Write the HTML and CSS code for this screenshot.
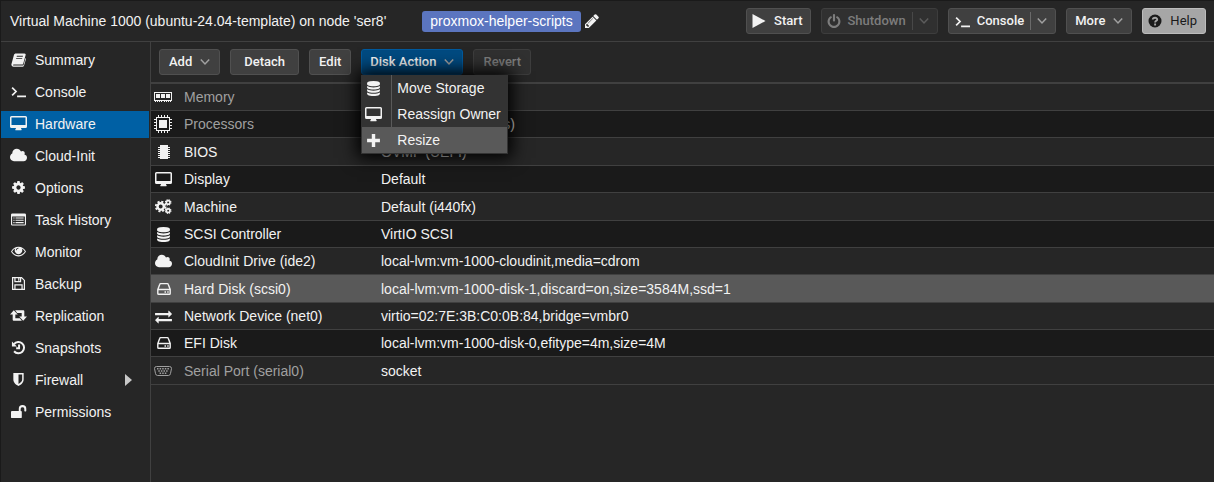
FILE: index.html
```
<!DOCTYPE html>
<html lang="en">
<head>
<meta charset="utf-8">
<title>Virtual Machine 1000</title>
<link rel="stylesheet" href="styles.css">
</head>
<body>
<svg class="sprite" aria-hidden="true">
  <symbol id="book" viewBox="0 0 16 16"><path fill-rule="evenodd" d="M5.200 1.500h9.200c1 0 1.500.8 1.200 1.700l-2.600 9.200c-.2.700-.8 1-1.500 1H3.300c-.9 0-1.300.6-.9 1.100h9.900c.6 0 1-.3 1.200-.9l2-7.200c.5.3.6.8.4 1.400l-2 6.500c-.3.900-1 1.400-1.900 1.400H2.700c-1.500 0-2.700-1.300-2.200-2.800L3.200 3c.3-.9 1-1.500 2-1.500zM6.300 4l-.3 1h6.500l.3-1zm-.7 2.300-.3 1h6.500l.3-1z"/></symbol>
  <symbol id="terminal" viewBox="0 0 16 16"><path fill="none" stroke="currentColor" stroke-width="1.800" d="m1.200 3.800 4.200 4.200-4.200 4.200M6.500 13.200H16"/></symbol>
  <symbol id="desktop" viewBox="0 0 17 15"><path fill-rule="evenodd" d="M1.500 0h14A1.500 1.500 0 0 1 17 1.500v9a1.500 1.500 0 0 1-1.500 1.500H11c0 .8.700 1.100.7 1.700 0 .3-.2.500-.5.500H5.800a.5.5 0 0 1-.5-.5c0-.6.7-.9.7-1.700H1.500A1.500 1.500 0 0 1 0 10.500v-9A1.500 1.500 0 0 1 1.500 0zm0 1.500V9h14V1.500z"/></symbol>
  <symbol id="cloud" viewBox="64 200 1920 1400"><path d="M1984 1152q0 159-112.500 271.500t-271.500 112.500h-1088q-185 0-316.500-131.500t-131.500-316.500q0-132 71-241.500t187-163.500q-2-28-2-43 0-212 150-362t362-150q158 0 286.500 88t187.500 230q70-62 166-62 106 0 181 75t75 181q0 75-41 138 129 30 213 134.500t84 239.500z"/></symbol>
  <symbol id="cog" viewBox="0 0 1792 1792"><path d="M1152 896q0-106-75-181t-181-75-181 75-75 181 75 181 181 75 181-75 75-181zm512-109v222q0 12-8 23t-20 13l-185 28q-19 54-39 91 35 50 107 138 10 12 10 25t-9 23q-27 37-99 108t-94 71q-12 0-26-9l-138-108q-44 23-91 38-16 136-29 186-7 28-36 28h-222q-14 0-24.500-8.500t-11.500-21.500l-28-184q-49-16-90-37l-141 107q-10 9-25 9-14 0-25-11-126-114-165-168-7-10-7-23 0-12 8-23 15-21 51-66.500t54-70.500q-27-50-41-99l-183-27q-13-2-21-12.500t-8-23.500v-222q0-12 8-23t19-13l186-28q14-46 39-92-40-57-107-138-10-12-10-24 0-10 9-23 26-36 98.500-107.500t94.500-71.500q13 0 26 10l138 107q44-23 91-38 16-136 29-186 7-28 36-28h222q14 0 24.500 8.500t11.500 21.500l28 184q49 16 90 37l142-107q9-9 24-9 13 0 25 10 129 119 165 170 7 8 7 22 0 12-8 23-15 21-51 66.500t-54 70.500q26 50 41 98l183 28q13 2 21 12.500t8 23.500z"/></symbol>
  <symbol id="list" viewBox="0 0 16 16"><path fill-rule="evenodd" d="M1.500 1.500h13A1.500 1.500 0 0 1 16 3v10a1.500 1.500 0 0 1-1.500 1.500h-13A1.500 1.500 0 0 1 0 13V3a1.500 1.500 0 0 1 1.500-1.500zM1.200 4.700v8.500h13.600V4.700z"/><path d="M2.500 5.800h1.300V7H2.500zm2.300 0h8.700V7H4.800zM2.500 8.200h1.300v1.200H2.500zm2.300 0h8.700v1.200H4.800zM2.500 10.700h1.300v1.200H2.500zm2.300 0h8.700v1.200H4.800z"/></symbol>
  <symbol id="eye" viewBox="0 0 16 16"><path fill-rule="evenodd" d="M8 2.800c3.400 0 6.300 2 8 5.200-1.700 3.200-4.600 5.200-8 5.200S1.700 11.200 0 8c1.700-3.200 4.600-5.200 8-5.200zM4.500 4.900C3.100 5.600 2 6.700 1.200 8c1.500 2.500 4 4 6.800 4s5.300-1.500 6.800-4c-.8-1.300-1.900-2.400-3.300-3.100A4 4 0 1 1 4.500 4.900zM8 3.900c-1.500 0-2.800 1.200-2.800 2.800h.9c0-1 .9-1.900 1.900-1.900z"/></symbol>
  <symbol id="save" viewBox="0 0 16 16"><path fill="none" stroke="currentColor" stroke-width="1.300" d="M1.700 1.700h9.600l3 3v9.600H1.700zM4.200 14V9.500h7.600V14M4.200 2v4h6V2M8.300 2.500V5"/></symbol>
  <symbol id="retweet" viewBox="0 0 18 16"><path d="M4 2.300 8.200 7H5.600v3.800h4.800l2.200 2.700H3.800c-.6 0-1-.4-1-1V7H-.2zM14 13.700 9.800 9h2.600V5.200H7.600L5.400 2.500h8.800c.6 0 1 .4 1 1V9h3z"/></symbol>
  <symbol id="history" viewBox="0 0 16 16"><path d="M1 1.500v5.300h5.300z"/><path fill="none" stroke="currentColor" stroke-width="2.100" d="M3.200 4.500A6 6 0 1 1 3.300 12M8.600 4.800v3.900H5.500"/></symbol>
  <symbol id="shield" viewBox="0 0 16 16"><path fill-rule="evenodd" d="M2.500 1h11v7c0 3.600-3.300 5.800-5.500 7-2.200-1.200-5.500-3.400-5.500-7zM8 2.600v10.200c2-1.200 3.900-2.700 3.900-4.800V2.600z"/></symbol>
  <symbol id="unlock" viewBox="0 0 16 16"><path fill-rule="evenodd" d="M1 7.500h7.300V5a4 4 0 0 1 8 0v2.300c0 .4-.3.700-.7.700h-.7a.7.7 0 0 1-.7-.7V5a2 2 0 0 0-3.900 0v2.500h.2c.6 0 1 .5 1 1v5.500c0 .6-.4 1-1 1H1a1 1 0 0 1-1-1V8.500a1 1 0 0 1 1-1z"/></symbol>
  <symbol id="play" viewBox="0 0 14 14"><path d="M.5 0 13.500 7 .5 14z"/></symbol>
  <symbol id="power" viewBox="128 0 1536 1664"><path d="M1664 896q0 156-61 298t-164 245-245 164-298 61-298-61-245-164-164-245-61-298q0-182 80.500-343t226.500-270q43-32 95.500-25t83.500 50q32 42 24.500 94.500t-49.500 84.500q-98 74-151.500 181t-53.500 228q0 104 40.500 198.500t109.500 163.500 163.500 109.500 198.500 40.500 198.500-40.500 163.500-109.500 109.500-163.500 40.500-198.500q0-121-53.500-228t-151.500-181q-42-32-49.500-84.500t24.500-94.500q31-43 84-50t95 25q146 109 226.500 270t80.500 343zm-640-768v640q0 52-38 90t-90 38-90-38-38-90v-640q0-52 38-90t90-38 90 38 38 90z"/></symbol>
  <symbol id="question" viewBox="0 0 14 14"><circle cx="7" cy="7" r="6.500"/><path fill="none" stroke="#a6a6a6" stroke-width="1.900" d="M4.700 5.500C5 3.200 9.300 3.200 9.200 5.400 9.200 6.900 7.100 6.800 7.100 8.600M7.100 9.600v1.900"/></symbol>
  <symbol id="pencil" viewBox="128 128 1536 1536"><path d="M491 1536l91-91-235-235-91 91v107h128v128h107zm523-928q0-22-22-22-10 0-17 7l-542 542q-7 7-7 17 0 22 22 22 10 0 17-7l542-542q7-7 7-17zm-54-192l416 416-832 832h-416v-416zm683 96q0 53-37 90l-166 166-416-416 166-165q36-38 90-38 53 0 91 38l235 234q37 39 37 91z"/></symbol>
  <symbol id="chevron" viewBox="0 0 10 10"><path fill="none" stroke="currentColor" stroke-width="1.500" d="m.8 2.500 4.200 4.500 4.200-4.500"/></symbol>
  <symbol id="database" viewBox="128 0 1536 1792"><path d="M896 768q237 0 443-43t325-127v170q0 69-103 128t-280 93.500-385 34.500-385-34.500-280-93.500-103-128v-170q119 84 325 127t443 43zm0 768q237 0 443-43t325-127v170q0 69-103 128t-280 93.500-385 34.500-385-34.500-280-93.500-103-128v-170q119 84 325 127t443 43zm0-384q237 0 443-43t325-127v170q0 69-103 128t-280 93.500-385 34.500-385-34.500-280-93.500-103-128v-170q119 84 325 127t443 43zm0-1152q208 0 385 34.500t280 93.500 103 128v128q0 69-103 128t-280 93.500-385 34.500-385-34.500-280-93.500-103-128v-128q0-69 103-128t280-93.500 385-34.500z"/></symbol>
  <symbol id="plus" viewBox="0 0 14 14"><path d="M5.400 1h3.200v4.400H13v3.200H8.600V13H5.400V8.600H1V5.400h4.400z"/></symbol>
  <symbol id="memory" viewBox="0 0 18 18"><path fill-rule="evenodd" d="M0 4h18v9h-1v1h-1v-1h-1v1h-1v-1h-1v1h-1v-1h-1v1h-1v-1H8v1H7v-1H6v1H5v-1H4v1H3v-1H2v1H1v-1H0zm1 1v7h16V5z"/><path d="M2 6h4v4H2zm5 0h4v4H7zm5 0h4v4h-4z"/></symbol>
  <symbol id="cpu" viewBox="0 0 18 18"><path fill-rule="evenodd" d="M2 2h14v14H2zm1 1v12h12V3z"/><path d="M5 5h8v8H5zM4 0h1v2H4zm3 0h1v2H7zm3 0h1v2h-1zm3 0h1v2h-1zM4 16h1v2H4zm3 0h1v2H7zm3 0h1v2h-1zm3 0h1v2h-1zM0 4h2v1H0zm0 3h2v1H0zm0 3h2v1H0zm0 3h2v1H0zM16 4h2v1h-2zm0 3h2v1h-2zm0 3h2v1h-2zm0 3h2v1h-2z"/></symbol>
  <symbol id="chip" viewBox="0 0 18 18"><path d="M6 2h8v14H6zM4 4h2v1H4zm0 2h2v1H4zm0 2h2v1H4zm0 2h2v1H4zm0 2h2v1H4zm0 2h2v1H4zM14 4h2v1h-2zm0 2h2v1h-2zm0 2h2v1h-2zm0 2h2v1h-2zm0 2h2v1h-2zm0 2h2v1h-2z"/></symbol>
  <symbol id="cogs" viewBox="0 0 18 16"><g fill="none" stroke="currentColor"><circle cx="6" cy="8" r="3.400" stroke-width="2.600"/><circle cx="6" cy="8" r="5.200" stroke-width="2" stroke-dasharray="2.240 1.840"/><circle cx="14" cy="3.600" r="1.900" stroke-width="1.700"/><circle cx="14" cy="3.600" r="2.900" stroke-width="1.200" stroke-dasharray="1.300 1"/><circle cx="14" cy="12.400" r="1.900" stroke-width="1.700"/><circle cx="14" cy="12.400" r="2.900" stroke-width="1.200" stroke-dasharray="1.300 1"/></g></symbol>
  <symbol id="disk" viewBox="0 0 14 14"><path fill="none" stroke="currentColor" stroke-width="1.400" d="M.8 7.500 2.800 2.200q.2-.6.800-.6h6.800q.6 0 .8.600l2 5.300v4q0 .8-.8.800H1.600q-.8 0-.8-.8zm0 0h12.400"/><path d="M7.500 9.200H9v1.500H7.500zm2.700 0h1.500v1.500h-1.500z"/></symbol>
  <symbol id="exchange" viewBox="0 100 1792 1592"><path d="M1792 1184v192q0 13-9.500 22.500t-22.500 9.500h-1376v192q0 13-9.500 22.500t-22.500 9.500q-12 0-24-10l-319-320q-9-9-9-22 0-14 9-23l320-320q9-9 23-9 13 0 22.500 9.500t9.500 22.500v192h1376q13 0 22.500 9.500t9.500 22.500zm0-544q0 14-9 23l-320 320q-9 9-23 9-13 0-22.500-9.500t-9.500-22.500v-192h-1376q-13 0-22.500-9.500t-9.500-22.500v-192q0-13 9.500-22.500t22.500-9.500h1376v-192q0-14 9-23t23-9q12 0 24 10l319 319q9 9 9 23z"/></symbol>
  <symbol id="serial" viewBox="0 0 18 18"><path fill="none" stroke="currentColor" d="M2.500 4.500h13q2 0 2 2l-1 5q-.4 2-2 2h-11q-1.600 0-2-2l-1-5q0-2 2-2z"/><path d="M3 6h1.500v1.500H3zm2.600 0h1.500v1.500H5.600zm2.600 0h1.500v1.500H8.200zm2.600 0h1.500v1.500h-1.500zm2.600 0h1.500v1.500h-1.500zM4.300 8.200h1.500v1.500H4.300zm2.600 0h1.500v1.500H6.900zm2.600 0H11v1.500H9.500zm2.600 0h1.500v1.500h-1.500zM5.600 10.500h1.500V12H5.600zm2.600 0h1.500V12H8.200zm2.600 0h1.500V12h-1.500z"/></symbol>
</svg>

<div class="app">
  <header class="header">
    <h1 class="title">Virtual Machine 1000 (ubuntu-24.04-template) on node 'ser8'</h1>
    <span class="tag">proxmox-helper-scripts</span>
    <button class="edit-tags" aria-label="Edit tags"><svg class="icon-s"><use href="#pencil"/></svg></button>
    <div class="actions">
      <button class="btn btn-icon"><svg class="icon-s"><use href="#play"/></svg>Start</button>
      <button class="btn btn-icon split" disabled><svg class="icon-s"><use href="#power"/></svg>Shutdown<span class="divider"></span><svg class="chevron"><use href="#chevron"/></svg></button>
      <button class="btn btn-icon split"><svg class="icon"><use href="#terminal"/></svg>Console<span class="divider"></span><svg class="chevron"><use href="#chevron"/></svg></button>
      <button class="btn">More<svg class="chevron"><use href="#chevron"/></svg></button>
      <button class="btn btn-icon help"><svg class="icon-s"><use href="#question"/></svg>Help</button>
    </div>
  </header>

  <div class="body">
    <nav class="sidebar">
      <a class="nav-item" href="#"><svg class="icon"><use href="#book"/></svg>Summary</a>
      <a class="nav-item" href="#"><svg class="icon"><use href="#terminal"/></svg>Console</a>
      <a class="nav-item active" href="#"><svg class="icon"><use href="#desktop"/></svg>Hardware</a>
      <a class="nav-item" href="#"><svg class="icon"><use href="#cloud"/></svg>Cloud-Init</a>
      <a class="nav-item" href="#"><svg class="icon"><use href="#cog"/></svg>Options</a>
      <a class="nav-item" href="#"><svg class="icon"><use href="#list"/></svg>Task History</a>
      <a class="nav-item" href="#"><svg class="icon"><use href="#eye"/></svg>Monitor</a>
      <a class="nav-item" href="#"><svg class="icon"><use href="#save"/></svg>Backup</a>
      <a class="nav-item" href="#"><svg class="icon"><use href="#retweet"/></svg>Replication</a>
      <a class="nav-item" href="#"><svg class="icon"><use href="#history"/></svg>Snapshots</a>
      <a class="nav-item" href="#"><svg class="icon"><use href="#shield"/></svg>Firewall<span class="expander"></span></a>
      <a class="nav-item" href="#"><svg class="icon"><use href="#unlock"/></svg>Permissions</a>
    </nav>

    <main class="main">
      <div class="toolbar">
        <button class="btn">Add<svg class="chevron"><use href="#chevron"/></svg></button>
        <button class="btn btn-wide">Detach</button>
        <button class="btn">Edit</button>
        <div class="dropdown">
          <button class="btn pressed" aria-expanded="true">Disk Action<svg class="chevron"><use href="#chevron"/></svg></button>
          <div class="menu" role="menu">
            <button class="menu-item" role="menuitem"><svg class="icon"><use href="#database"/></svg><span class="menu-text">Move Storage</span></button>
            <button class="menu-item" role="menuitem"><svg class="icon"><use href="#desktop"/></svg><span class="menu-text">Reassign Owner</span></button>
            <button class="menu-item hover" role="menuitem"><svg class="icon"><use href="#plus"/></svg><span class="menu-text">Resize</span></button>
          </div>
        </div>
        <button class="btn" disabled>Revert</button>
      </div>

      <table class="grid">
        <tbody>
          <tr><td class="ico"><svg class="icon-l"><use href="#memory"/></svg></td><th class="muted" scope="row">Memory</th><td></td></tr>
          <tr><td class="ico"><svg class="icon-l"><use href="#cpu"/></svg></td><th class="muted" scope="row">Processors</th><td>2 (1 sockets, 2 cores)</td></tr>
          <tr><td class="ico"><svg class="icon-l"><use href="#chip"/></svg></td><th scope="row">BIOS</th><td>OVMF (UEFI)</td></tr>
          <tr><td class="ico"><svg class="icon"><use href="#desktop"/></svg></td><th scope="row">Display</th><td>Default</td></tr>
          <tr><td class="ico"><svg class="icon"><use href="#cogs"/></svg></td><th scope="row">Machine</th><td>Default (i440fx)</td></tr>
          <tr><td class="ico"><svg class="icon"><use href="#database"/></svg></td><th scope="row">SCSI Controller</th><td>VirtIO SCSI</td></tr>
          <tr><td class="ico"><svg class="icon"><use href="#cloud"/></svg></td><th scope="row">CloudInit Drive (ide2)</th><td>local-lvm:vm-1000-cloudinit,media=cdrom</td></tr>
          <tr class="selected"><td class="ico"><svg class="icon-s"><use href="#disk"/></svg></td><th scope="row">Hard Disk (scsi0)</th><td>local-lvm:vm-1000-disk-1,discard=on,size=3584M,ssd=1</td></tr>
          <tr><td class="ico"><svg class="icon"><use href="#exchange"/></svg></td><th scope="row">Network Device (net0)</th><td>virtio=02:7E:3B:C0:0B:84,bridge=vmbr0</td></tr>
          <tr><td class="ico"><svg class="icon-s"><use href="#disk"/></svg></td><th scope="row">EFI Disk</th><td>local-lvm:vm-1000-disk-0,efitype=4m,size=4M</td></tr>
          <tr><td class="ico dim"><svg class="icon-l"><use href="#serial"/></svg></td><th class="muted" scope="row">Serial Port (serial0)</th><td>socket</td></tr>
        </tbody>
      </table>
    </main>
  </div>
</div>
</body>
</html>
```
FILE: styles.css
```
* { box-sizing: border-box; }

body {
  margin: 0;
  background: #262626;
  color: #f2f2f2;
  font-family: "Liberation Sans", Arial, sans-serif;
  font-size: 14px;
  line-height: 18px;
}

button { font: inherit; color: inherit; }
svg { fill: currentColor; flex: none; display: block; }

.sprite { display: none; }
.icon { width: 17px; height: 15px; }
.icon-s { width: 14px; height: 14px; }
.icon-l { width: 18px; height: 18px; }
.chevron { width: 10px; height: 10px; color: #a0a0a0; }

.app {
  display: flex;
  flex-direction: column;
  min-height: 100vh;
  border-top: 1px solid #1a1a1a;
  border-left: 1px solid #1a1a1a;
}

.header {
  display: flex;
  align-items: center;
  height: 41px;
  padding: 0 8px 0 9px;
  border-bottom: 1px solid #404040;
}
.title { margin: 0; font-size: 14px; font-weight: 400; white-space: nowrap; }
.tag {
  margin-left: 36px;
  padding: 1px 8px 2px;
  border-radius: 3px;
  background: #5b75bf;
  color: #fff;
  white-space: nowrap;
}
.edit-tags { margin-left: 4px; padding: 0; border: 0; background: none; }
.actions { display: flex; gap: 10px; margin-left: auto; }

.btn {
  display: flex;
  align-items: center;
  height: 26px;
  padding: 0 8px;
  border: 1px solid #505050;
  border-radius: 3px;
  background: #404040;
  font-family: Roboto, "Liberation Sans", sans-serif;
  font-size: 13px;
  font-weight: 500;
  white-space: nowrap;
}
.btn .chevron { margin-left: 8px; }
.btn-icon { gap: 8px; padding: 0 8px 0 5px; }
.btn-icon .chevron { margin-left: 0; }
.toolbar .btn { padding: 0 9px; }
.toolbar .btn-wide { padding: 0 13px; }
.toolbar .pressed { padding: 0 8px; }
.btn:disabled { border-color: #3d3d3d; background: #303030; color: #7d7d7d; }
.btn:disabled .chevron { color: #5c5c5c; }
.divider { width: 1px; height: 18px; background: #6a6a6a; }
.btn:disabled .divider { background: #484848; }
.split { gap: 6px; }
.help { border-color: #bcbcbc; background: #a6a6a6; color: #1a1a1a; font-weight: 400; }
.pressed { border-color: #005a9e; background: #004a80; }

.body { display: flex; flex: 1; }

.sidebar {
  display: flex;
  flex-direction: column;
  gap: 5px;
  width: 150px;
  padding: 5px 1px 0 0;
  border-right: 1px solid #404040;
}
.nav-item {
  display: flex;
  align-items: center;
  gap: 8px;
  height: 27px;
  padding: 0 17px 2px 9px;
  color: #f2f2f2;
  text-decoration: none;
}
.nav-item.active { background: #0060a4; }
.expander {
  margin-left: auto;
  border: 6px solid transparent;
  border-left: 7px solid #c8c8c8;
  border-right: 0;
}

.main { flex: 1; min-width: 0; }

.toolbar {
  display: flex;
  gap: 10px;
  padding: 7px 8px;
  border-bottom: 2px solid #404040;
}

.dropdown { position: relative; }
.menu {
  position: absolute;
  top: 100%;
  left: 0;
  z-index: 2;
  padding: 0 1px 1px;
  background: #333;
  box-shadow: 0 0 16px 4px #000;
}
.menu-item {
  display: grid;
  grid-template-columns: 29px auto;
  align-items: center;
  width: 100%;
  height: 26px;
  padding: 0;
  border: 0;
  background: #333;
  text-align: left;
}
.menu-item .icon { margin-left: 3px; }
.menu-text { padding: 4px 6px 4px 5px; border-left: 1px solid #5a5a5a; white-space: nowrap; }
.menu-item.hover { background: #595959; }
.hover .menu-text { border-color: #595959; }

.grid { width: 100%; border-spacing: 0; table-layout: fixed; }
.grid td, .grid th {
  height: 27px;
  padding: 0;
  border-bottom: 1px solid #404040;
  font-weight: 400;
  text-align: left;
  white-space: nowrap;
}
.grid tr:nth-child(3) td, .grid tr:nth-child(3n+5) td { height: 28px; }
.grid tr:nth-child(even) { background: #1a1a1a; }
.grid tr.selected { background: #595959; }
.grid .ico { width: 33px; }
.grid .ico svg { margin-left: 4px; }
.grid .ico .icon-s { margin-left: 6px; }
.grid .ico .icon-l { margin-left: 3px; }
.grid th { width: 197px; }
.grid .muted { color: #a0a0a0; }
.grid .dim { color: #a0a0a0; }
```
